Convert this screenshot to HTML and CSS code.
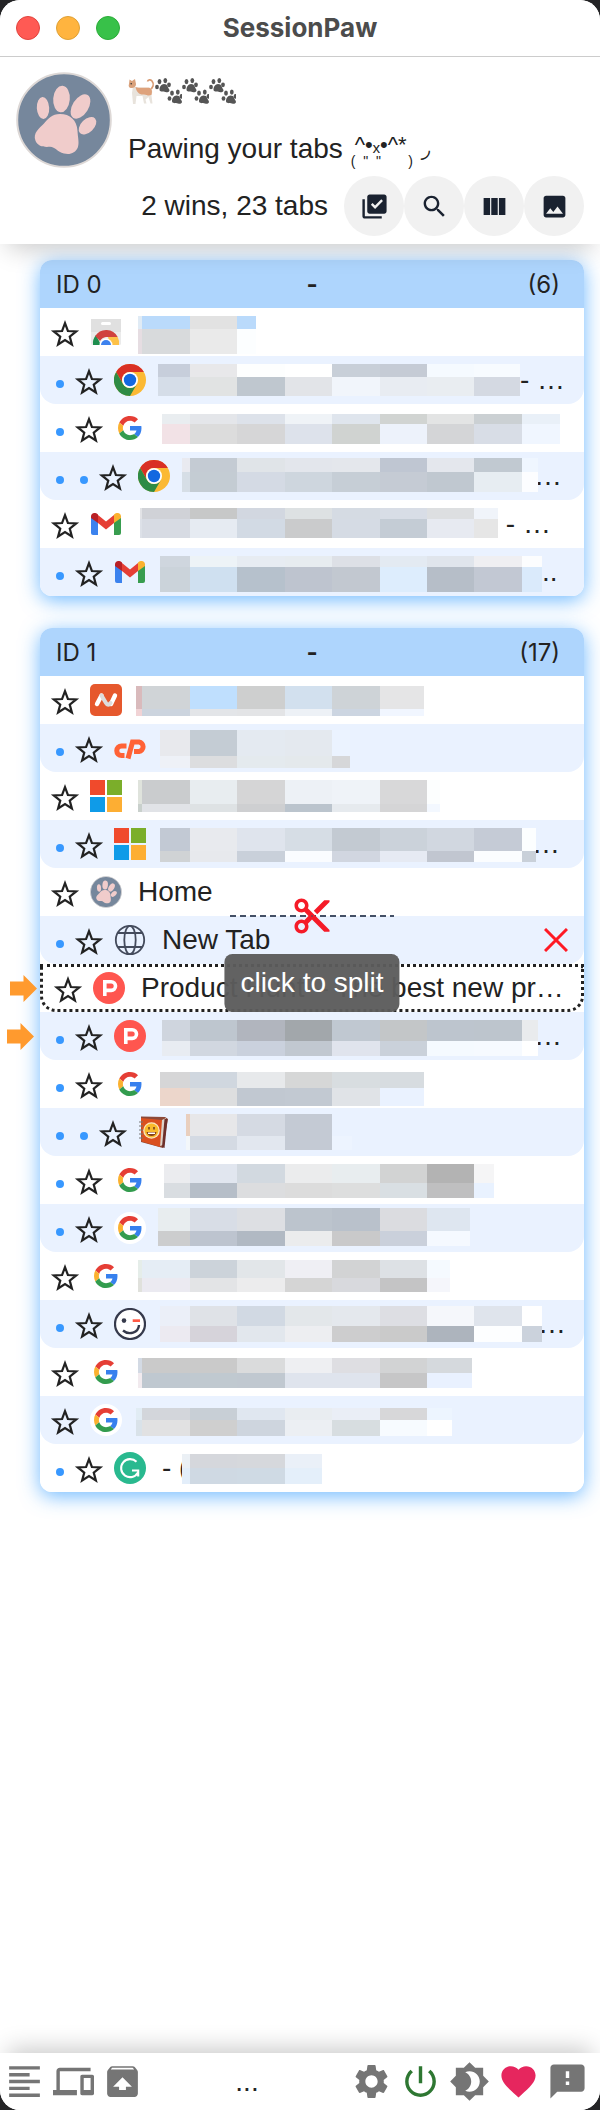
FILE: index.html
```html
<!DOCTYPE html>
<html lang="en">
<head>
<meta charset="utf-8">
<meta name="viewport" content="width=device-width, initial-scale=1">
<title>SessionPaw</title>
<link rel="stylesheet" href="styles.css">
</head>
<body>
<svg class="sprite" aria-hidden="true">
  <symbol id="star" viewBox="0 0 34 34"><path d="M17 8.200L19.900 16l8.300.4-6.450 5.150L23.900 29.500 17 25l-6.900 4.500 2.150-7.950L5.800 16.400l8.300-.4z" fill="none" stroke="#222" stroke-width="2.200" stroke-miterlimit="10"/></symbol>
  <symbol id="paw" viewBox="0 0 96 96"><circle cx="48" cy="48" r="46.800" fill="#76879c" stroke="#ddd8d6" stroke-width="2"/><g fill="#f0cccb"><ellipse cx="27" cy="36" rx="6.200" ry="11" transform="rotate(-3 27 36)"/><ellipse cx="45.500" cy="27" rx="8.300" ry="13.300" transform="rotate(5 45.500 27)"/><ellipse cx="64.500" cy="34.500" rx="8" ry="13.500" transform="rotate(32 64.500 34.500)"/><ellipse cx="71.500" cy="53.800" rx="6.500" ry="10.500" transform="rotate(46 71.500 53.800)"/><path d="M44 42c10 0 17 6 17.500 17 .4 7 2 12 .3 16.500C59.500 81 54 83 48 81.500 41 80 39.500 75 34 74.800c-6 .5-12 0-14.500-6-3-8 4-12.500 8.500-17.300C32 47 36 42 44 42z"/></g></symbol>
  <symbol id="chrome" viewBox="0 0 32 32"><circle cx="16" cy="16" r="16" fill="#fbb934"/><path d="M2.140 8A16 16 0 0 1 29.860 8H16a8 8 0 0 0-6.930 12z" fill="#d93025"/><path d="M2.140 8A16 16 0 0 0 16 32l6.930-12A8 8 0 0 1 9.070 20z" fill="#2e8b45"/><circle cx="16" cy="16" r="8" fill="#fff"/><circle cx="16" cy="16" r="6.200" fill="#1368e0"/></symbol>
  <symbol id="store" viewBox="0 0 32 32"><path d="M1 3h30v24.500a1.500 1.500 0 0 1-1.500 1.500h-27A1.500 1.500 0 0 1 1 27.500z" fill="#ebebeb"/><path d="M1 3h30v13H1z" fill="#e0e0e0"/><rect x="11" y="6" width="10" height="3" rx="1.500" fill="#fff"/><path d="M3 29a13 13 0 0 1 3-10l5 10z" fill="#1e8e4e"/><path d="M5.200 20A13 13 0 0 1 27.700 21H16a8 8 0 0 0-6 4z" fill="#d0423e"/><path d="M18 21h9.700A13 13 0 0 1 29 29h-9z" fill="#fdc148"/><path d="M9.500 29a6.500 6.500 0 0 1 13 0z" fill="#fff"/><path d="M11 29a5 5 0 0 1 10 0z" fill="#3d82ee"/></symbol>
  <symbol id="google" viewBox="-8 -8 64 64"><path fill="#e53e35" d="M24 9.500c3.540 0 6.710 1.220 9.210 3.600l6.850-6.850C35.900 2.380 30.470 0 24 0 14.620 0 6.510 5.380 2.560 13.220l7.980 6.190C12.430 13.720 17.740 9.500 24 9.500z"/><path fill="#3780ee" d="M46.980 24.550c0-1.570-.15-3.090-.38-4.550H24v9.020h12.940c-.58 2.960-2.260 5.480-4.780 7.180l7.730 6c4.510-4.180 7.090-10.360 7.090-17.650z"/><path fill="#fbb12f" d="M10.530 28.590c-.48-1.450-.76-2.990-.76-4.590s.27-3.140.76-4.590l-7.980-6.190C.92 16.460 0 20.120 0 24s.92 7.540 2.560 10.780z"/><path fill="#339c4e" d="M24 48c6.480 0 11.930-2.130 15.890-5.810l-7.730-6c-2.150 1.450-4.920 2.300-8.160 2.300-6.260 0-11.570-4.220-13.470-9.910l-7.980 6.190C6.510 42.620 14.620 48 24 48z"/></symbol>
  <symbol id="google-round" viewBox="0 0 32 32"><circle cx="16" cy="16" r="16" fill="#fff"/><use href="#google" width="32" height="32"/></symbol>
  <symbol id="gmail" viewBox="0 0 32 32"><path fill="#3b82ee" d="M1 8l7 5v14H3a2 2 0 0 1-2-2z"/><path fill="#389d4f" d="M31 8l-7 5v14h5a2 2 0 0 0 2-2z"/><path fill="#e53e35" d="M8 7l8 6.500L24 7v8l-8 6.500L8 15z"/><path fill="#b92025" d="M1 8.500C1 5 4.800 3.800 8 6.500V15l-7-5z"/><path fill="#fbb12f" d="M31 8.500c0-3.500-3.800-4.700-7-2V15l7-5z"/></symbol>
  <symbol id="namecheap" viewBox="0 0 32 32"><rect width="32" height="32" rx="5" fill="#e6582d"/><path d="M7 20l4.500-8.500M21 20l4-8.500" stroke="#fff" stroke-width="4.400" stroke-linecap="round"/><path d="M11.500 11.500l4.500 7.500q2 3.500 4.500 0" fill="none" stroke="#ddd" stroke-width="4" stroke-linecap="round"/></symbol>
  <symbol id="cpanel" viewBox="0 0 32 32"><path d="M12.500 14H7.500a4.700 4.700 0 0 0 0 9.500h3M14 26.500L18.500 10h6.500a4.800 4.800 0 0 1 0 9.500h-5" fill="none" stroke="#ff6236" stroke-width="5"/></symbol>
  <symbol id="microsoft" viewBox="0 0 32 32"><path fill="#f04a2c" d="M0 0h15v15H0z"/><path fill="#7bae2a" d="M17 0h15v15H17z"/><path fill="#0f9be8" d="M0 17h15v15H0z"/><path fill="#fdae33" d="M17 17h15v15H17z"/></symbol>
  <symbol id="globe" viewBox="0 0 32 32"><g fill="none" stroke="#444b5c" stroke-width="1.800"><circle cx="16" cy="16" r="14.200"/><ellipse cx="16" cy="16" rx="5.700" ry="14.200"/><path d="M4 9h24M4 23h24"/></g></symbol>
  <symbol id="producthunt" viewBox="0 0 32 32"><circle cx="16" cy="16" r="16" fill="#ff564f"/><path d="M11.800 24V9.800h6.400a4.300 4.300 0 0 1 0 8.600h-6.400" fill="none" stroke="#fff" stroke-width="3.600"/></symbol>
  <symbol id="book" viewBox="0 0 32 32"><path d="M3 .5l24 .5 3 2-5 29L3 26z" fill="#8c4938"/><path d="M22 5l6-3-3 27-3 1z" fill="#ddd3ca"/><path d="M26.500 3l3 0-3 29-2.500-1z" fill="#6d2f2a"/><path d="M3 2l21 2-2 27L3.500 25.500z" fill="#da501f"/><circle cx="13.500" cy="14.500" r="8.300" fill="#fbe6bd"/><circle cx="13.500" cy="14.500" r="7" fill="#f9bb2c"/><path d="M11 11v2.500M16 11v2.500" stroke="#6d3b1c" stroke-width="1.500"/><path d="M8.500 16h10q-1 4-5 4t-5-4z" fill="#854016"/><path d="M10 16.500h7v1.500h-7z" fill="#fff"/><path d="M1 6h4M1 10h4M1 14h4M1 18h4M1 22h4" stroke="#777" stroke-width="1.200"/></symbol>
  <symbol id="wink" viewBox="0 0 32 32"><circle cx="16" cy="16" r="15" fill="#fff" stroke="#363a4c" stroke-width="2.200"/><circle cx="10" cy="12.600" r="2.300" fill="#363a4c"/><path d="M18.700 11.300H26V14h-7.300z" fill="#ff5a45"/><path d="M9 22.500c6 5 15.500 2.500 16-5.500" fill="none" stroke="#363a4c" stroke-width="2.400"/></symbol>
  <symbol id="grammarly" viewBox="0 0 32 32"><circle cx="16" cy="16" r="16" fill="#29b98f"/><path d="M22.500 9.800A9 9 0 1 0 24 20.500M18 18.500h6.200v6" fill="none" stroke="#fff" stroke-width="2.100"/></symbol>
  <symbol id="arrow" viewBox="0 0 27 27"><path fill="#ff9a2e" d="M0 6.500h13.500V0L27 13.500 13.500 27v-6.500H0z"/></symbol>
  <symbol id="paw-pair" viewBox="0 0 27 27"><g id="print" fill="#555"><ellipse cx="2" cy="9" rx="1.900" ry="2.300"/><ellipse cx="4.500" cy="3.600" rx="1.900" ry="2.600"/><ellipse cx="10.300" cy="2.600" rx="1.900" ry="2.600"/><ellipse cx="14" cy="6.800" rx="1.900" ry="2.400"/><path d="M9 6c4 0 3.500 3.500 5 5 1.500 2.500-1 3.800-3.500 3-2.500-.7-6 .3-6-2.500C4.500 8.800 6.500 6 9 6z"/></g><use href="#print" x="12.500" y="11.500"/></symbol>
</svg>

<div class="window">
  <div class="titlebar">
    <div class="lights">
      <button class="light light-close" aria-label="Close"></button>
      <button class="light light-min" aria-label="Minimise"></button>
      <button class="light light-max" aria-label="Zoom"></button>
    </div>
    <h1 class="app-name">SessionPaw</h1>
  </div>

  <header class="header">
    <svg class="avatar" role="img" aria-label="SessionPaw logo"><use href="#paw"/></svg>
    <div class="intro">
      <div class="cats">
        <svg class="cat" viewBox="0 0 27 27" aria-hidden="true"><path d="M21.500 12c3.500-1.500 5-6 2.500-9-1.500-1.700-4-1.500-4.500.5" fill="none" stroke="#d89b73" stroke-width="1.700"/><path d="M5 8c5 2.500 11 1 16 1.500 4 1 3.500 5 2.500 8l1 8h-2l-2-6.500-3 2.500 1 4h-2.500L14.500 18l-6 0-1 8H5l-1-11z" fill="#e8e3dc"/><path d="M7.500 9c5 1.500 9 .5 13.500.8 4 1 3 5 2.500 7-3.500 2-4.500-.5-8-.3-4 .5-7-2.500-8-7.500z" fill="#dea27c"/><path d="M1.500 1.500L4 3l3-2 1 5c0 3-2.500 4-4.500 4S0 8.500 1 6z" fill="#d9a17b"/><circle cx="3.200" cy="5.800" r=".8" fill="#333"/></svg>
        <svg class="pair"><use href="#paw-pair"/></svg><svg class="pair"><use href="#paw-pair"/></svg><svg class="pair"><use href="#paw-pair"/></svg>
      </div>
      <div class="tagline">
        <span>Pawing your tabs</span>
        <span class="kaomoji"><span class="face">^•ₓ•^*</span><span class="paws">( &nbsp;" &nbsp;" &nbsp; &nbsp; &nbsp; )</span></span><span class="tail-mark">◞</span>
      </div>
      <div class="summary">
        <span class="counts">2 wins, 23 tabs</span>
        <div class="tools">
          <button class="tool" aria-label="Select all"><svg viewBox="0 0 24 24"><path d="M20 2H8c-1.100 0-2 .9-2 2v12c0 1.100.9 2 2 2h12c1.100 0 2-.9 2-2V4c0-1.100-.9-2-2-2zm-7.530 12L9 10.500l1.400-1.410 2.070 2.080L17.600 6 19 7.410 12.470 14zM4 6H2v14c0 1.100.9 2 2 2h14v-2H4V6z"/></svg></button>
          <button class="tool" aria-label="Search"><svg viewBox="0 0 24 24"><path d="M15.500 14h-.79l-.28-.27C15.410 12.590 16 11.110 16 9.500 16 5.910 13.090 3 9.500 3S3 5.910 3 9.500 5.910 16 9.500 16c1.610 0 3.090-.59 4.230-1.570l.27.28v.79l5 4.990L20.490 19l-4.990-5zm-6 0C7.010 14 5 11.990 5 9.500S7.010 5 9.500 5 14 7.010 14 9.500 11.990 14 9.500 14z"/></svg></button>
          <button class="tool" aria-label="Columns"><svg viewBox="0 0 24 24"><path d="M9.330 5v14h5.330V5zM15.670 5v14H21V5zM8.330 5v14H3V5z"/></svg></button>
          <button class="tool" aria-label="Image"><svg viewBox="0 0 24 24"><path d="M21 19V5c0-1.100-.9-2-2-2H5c-1.100 0-2 .9-2 2v14c0 1.100.9 2 2 2h14c1.100 0 2-.9 2-2zM5 18l3.500-4.500 2.500 3.010L14.500 12 19 18z"/></svg></button>
        </div>
      </div>
    </div>
  </header>

  <main class="sessions">
    <section class="card" aria-label="Window 0">
      <div class="card-head"><span>ID 0</span><b>-</b><span class="count">(6)</span></div>
      <ul class="tabs" data-window="0"></ul>
    </section>
    <section class="card" aria-label="Window 1">
      <div class="card-head"><span>ID 1</span><b>-</b><span class="count">(17)</span></div>
      <ul class="tabs" data-window="1"></ul>
    </section>
  </main>

  <footer class="footer">
    <div class="group">
      <button class="action" aria-label="List"><svg viewBox="0 0 24 24"><path d="M15 15H3v2h12v-2zm0-8H3v2h12V7zM3 13h18v-2H3v2zm0 8h18v-2H3v2zM3 3v2h18V3H3z"/></svg></button>
      <button class="action" aria-label="Devices"><svg viewBox="0 0 24 24"><path d="M4 6h18V4H4c-1.100 0-2 .9-2 2v11H0v3h14v-3H4V6zm19 2h-6c-.55 0-1 .45-1 1v10c0 .55.45 1 1 1h6c.55 0 1-.45 1-1V9c0-.55-.45-1-1-1zm-1 9h-4v-7h4v7z"/></svg></button>
      <button class="action" aria-label="Restore"><svg viewBox="0 0 24 24"><path d="M20.550 5.220l-1.390-1.680C18.880 3.210 18.470 3 18 3H6c-.47 0-.88.210-1.150.550L3.460 5.220C3.170 5.570 3 6.010 3 6.500V19c0 1.100.89 2 2 2h14c1.100 0 2-.9 2-2V6.500c0-.49-.17-.93-.45-1.280zM12 9.500l5.500 5.500H14v2h-4v-2H6.500L12 9.500zM5.120 5l.82-1h12l.93 1H5.120z"/></svg></button>
    </div>
    <span class="status">...</span>
    <div class="group">
      <button class="action" aria-label="Settings"><svg viewBox="0 0 24 24"><path d="M19.140 12.940c.04-.3.060-.61.060-.94 0-.32-.02-.64-.07-.94l2.030-1.580c.18-.14.230-.41.120-.61l-1.920-3.320c-.12-.22-.37-.29-.59-.22l-2.390.96c-.5-.38-1.030-.7-1.620-.94l-.36-2.540c-.04-.24-.24-.41-.48-.41h-3.840c-.24 0-.43.170-.47.410l-.36 2.540c-.59.240-1.130.570-1.620.940l-2.390-.96c-.22-.08-.47 0-.59.220L2.740 8.870c-.12.210-.08.470.12.610l2.030 1.580c-.05.3-.09.63-.09.94s.02.640.07.940l-2.030 1.580c-.18.140-.23.410-.12.610l1.920 3.320c.12.220.37.290.59.220l2.390-.96c.5.380 1.030.7 1.620.940l.36 2.540c.05.240.24.410.48.410h3.840c.24 0 .44-.17.470-.41l.36-2.540c.59-.24 1.130-.56 1.620-.94l2.390.96c.22.080.47 0 .59-.22l1.920-3.320c.12-.22.070-.47-.12-.61l-2.010-1.580zM12 15.600c-1.980 0-3.600-1.620-3.600-3.600s1.620-3.600 3.600-3.600 3.600 1.620 3.600 3.600-1.620 3.600-3.600 3.600z"/></svg></button>
      <button class="action power" aria-label="Power"><svg viewBox="0 0 24 24"><path d="M13 3h-2v10h2V3zm4.830 2.170l-1.420 1.420C17.990 7.860 19 9.810 19 12c0 3.870-3.130 7-7 7s-7-3.130-7-7c0-2.190 1.010-4.140 2.580-5.420L6.170 5.170C4.230 6.820 3 9.260 3 12c0 4.970 4.030 9 9 9s9-4.030 9-9c0-2.740-1.230-5.180-3.170-6.830z"/></svg></button>
      <button class="action" aria-label="Theme"><svg viewBox="0 0 24 24"><path d="M20 8.690V4h-4.690L12 .69 8.690 4H4v4.690L.69 12 4 15.310V20h4.690L12 23.310 15.310 20H20v-4.690L23.310 12 20 8.690zM12 18c-.89 0-1.740-.2-2.500-.55C11.560 16.500 13 14.420 13 12s-1.440-4.500-3.500-5.450C10.260 6.200 11.110 6 12 6c3.310 0 6 2.690 6 6s-2.690 6-6 6z"/></svg></button>
      <button class="action heart" aria-label="Favourite"><svg viewBox="0 0 24 24"><path d="M12 21.350l-1.450-1.320C5.400 15.360 2 12.280 2 8.500 2 5.420 4.420 3 7.500 3c1.740 0 3.410.81 4.500 2.090C13.090 3.810 14.760 3 16.500 3 19.580 3 22 5.420 22 8.500c0 3.780-3.400 6.860-8.550 11.540L12 21.350z"/></svg></button>
      <button class="action" aria-label="Feedback"><svg viewBox="0 0 24 24"><path d="M20 2H4c-1.100 0-1.990.9-1.990 2L2 22l4-4h14c1.100 0 2-.9 2-2V4c0-1.100-.9-2-2-2zm-7 12h-2v-2h2v2zm0-4h-2V6h2v4z"/></svg></button>
    </div>
  </footer>
</div>
<script src="tabs.js"></script>
</body>
</html>
```

FILE: styles.css
```css
* { box-sizing: border-box; }

body {
  margin: 0;
  background: #242426;
  color: #222;
  font: 28px/48px "Liberation Sans", Arial, sans-serif;
}

button {
  margin: 0;
  padding: 0;
  border: 0;
  background: none;
  font: inherit;
  color: inherit;
  cursor: pointer;
}

svg { display: block; flex: none; }
.sprite { position: absolute; width: 0; height: 0; }

.window {
  display: flex;
  flex-direction: column;
  min-height: 100vh;
  overflow: hidden;
  background: #fff;
  border-radius: 20px;
}

/* Title bar */
.titlebar {
  position: relative;
  z-index: 2;
  display: grid;
  grid-template-columns: 1fr auto 1fr;
  align-items: center;
  height: 57px;
  padding: 0 16px;
  background: #fff;
  border-bottom: 1px solid #ccc;
}
.lights { display: flex; gap: 16px; }
.light { width: 24px; height: 24px; border: 1px solid #e0443e; border-radius: 50%; background: #ff5a54; }
.light-min { border-color: #dea035; background: #ffb43f; }
.light-max { border-color: #2bac38; background: #38c149; }
.app-name { margin: 0; color: #4c4c4c; font: 700 26px/32px Inter, sans-serif; }

/* Header */
.header {
  position: relative;
  z-index: 1;
  display: flex;
  gap: 16px;
  padding: 4px 16px 8px;
  background: #fff;
  box-shadow: 0 12px 24px -8px rgba(0, 0, 0, .22);
}
.avatar { width: 96px; height: 96px; margin-top: 11px; }
.intro { flex: 1; display: grid; grid-template-rows: 60px 55px 60px; align-items: center; }
.cats { display: flex; }
.cat, .pair { width: 27px; height: 27px; }
.tagline { display: flex; gap: 8px; align-items: center; }
.kaomoji { display: flex; flex-direction: column; line-height: 16px; padding-top: 8px; white-space: nowrap; }
.face { padding-left: 4px; font-size: 22px; }
.paws { font-size: 14px; }
.tail-mark { font-family: "DejaVu Sans", sans-serif; font-size: 24px; line-height: 24px; }
.summary { display: flex; justify-content: flex-end; align-items: center; gap: 16px; }
.tools { display: flex; }
.tool { display: grid; place-items: center; width: 60px; height: 60px; border-radius: 50%; background: #f1f1f1; }
.tool svg { width: 29px; height: 29px; fill: #1a2230; }

/* Window cards */
.sessions { flex: 1; display: flex; flex-direction: column; gap: 32px; padding: 16px 16px 32px 40px; }
.card {
  border-radius: 12px;
  background: #fff;
  box-shadow: 0 4px 20px rgba(50, 155, 255, .7);
}
.card-head {
  display: grid;
  grid-template-columns: 1fr auto 1fr;
  padding: 1px 16px 0;
  border-radius: 12px 12px 0 0;
  background: #aed5fd;
  font: 24px/47px Inter, sans-serif;
}
.count { padding-right: 8px; text-align: right; }

.tabs { margin: 0; padding: 0; list-style: none; }
.tab {
  position: relative;
  display: flex;
  align-items: center;
  height: 48px;
  padding: 0 16px 0 8px;
  background: #fff;
}
.tab:nth-child(even) { background: #eaf2ff; border-radius: 0 0 16px 16px; }
.tab:last-child { border-radius: 0 0 12px 12px; }
.tab.current { padding-right: 13px; border: 3px dotted #222; border-radius: 0 0 16px 16px; }
.dot { flex: none; width: 24px; height: 8px; padding: 0 8px; margin-top: 8px; }
.dot::before { content: ""; display: block; width: 8px; height: 8px; border-radius: 50%; background: #3898ff; }
.star { flex: none; margin-right: 8px; }
.star svg { width: 34px; height: 34px; }
.favicon { width: 32px; height: 32px; margin-right: 16px; }
.title { flex: 1; min-width: 0; overflow: hidden; color: inherit; text-decoration: none; text-overflow: ellipsis; white-space: pre; }
.title.masked { display: flex; margin-left: -4px; text-overflow: clip; }
.lead { overflow: hidden; padding-left: 4px; }
.mosaic { position: relative; height: 48px; }
.tuck { margin-left: -4px; }
.close { width: 24px; height: 24px; }
.close svg { width: 24px; height: 24px; stroke: #ff1a24; stroke-width: 3; }
.arrow { position: absolute; left: -33px; width: 27px; height: 27px; }

/* Split marker between two tabs */
.split {
  position: absolute;
  z-index: 2;
  top: -21px;
  left: 50%;
  width: 164px;
  height: 42px;
  display: grid;
  place-items: center;
  transform: translateX(-50%);
  background: repeating-linear-gradient(90deg, #445066 0 6px, transparent 6px 10px) center / 100% 2px no-repeat;
}
.split svg { width: 42px; height: 42px; fill: #f51b28; }
.tooltip {
  position: absolute;
  z-index: 2;
  top: 38px;
  left: 50%;
  padding: 5px 16px;
  transform: translateX(-50%);
  border-radius: 8px;
  background: rgba(92, 92, 92, .96);
  color: #fff;
  white-space: nowrap;
}

/* Footer */
.footer {
  display: flex;
  align-items: center;
  height: 57px;
  padding: 0 12px 0 4px;
  background: #fff;
  box-shadow: 0 -12px 24px -8px rgba(0, 0, 0, .22);
}
.group { display: flex; gap: 8px; }
.action, .action svg { width: 41px; height: 41px; fill: #757575; }
.power svg { fill: #2e7732; }
.heart svg { fill: #e6265e; }
.status { flex: 1; text-align: center; }
```

FILE: tabs.js
```js
// Each masked title holds a mosaic: [x start, x end, top, middle, bottom, upper colours, lower colours].
const windows = [
  [
    { icon: "store", mask: [138, 256, 8, 21, 46, "e0ebf5 badafb e2e2e2 badafb", "e6dde2 d8dadc eaeaea fcfeff"] },
    { icon: "chrome", depth: 1, mask: [158, 520, 8, 21, 40, "c7cedb e8e8ea fdfefe ffffff c8cfd8 c5cbd5 f5faff f7fbff", "d5dde8 e1e3e3 bfc7cf e2e4e8 f1f5fb e8ecf2 e9edf1 d4d9e2"], tail: "- …" },
    { icon: "google", depth: 1, mask: [162, 560, 10, 20, 40, "e9edf0 e4e6ea dde2ea eff3f7 dfe5ed d1d4d2 e3e4e4 cbd0d3 e9f0f8", "f2e2e6 dcdcdc d6d6d7 dde2eb d0d3d1 edf2fb d4d5d7 d8dde6 f0f6ff"] },
    { icon: "chrome", depth: 2, mask: [182, 538, 6, 20, 40, "e9eaf0 c4cbd3 e0e4e8 e3e6ec e4e7ec bfc6d2 e4e7ed c1c9d1 eff6ff", "d6dee6 c4ccd3 d4dae4 ced6de c6ced6 c5cbd4 c0c8d0 e7edf2 fcfdff"], tail: "…", tuck: true },
    { icon: "gmail", mask: [140, 498, 8, 19, 38, "e2e3e6 d0d2d7 c7c8c8 d2d7e0 dde1e3 d5dbe3 d8dde6 dddfe1 f0f4fa", "dde1e8 d7dbe3 e6ebf2 d2dae4 cacbcc d5dbe4 c4ccd5 e7eaf1 e6e6e6"], tail: " - …" },
    { icon: "gmail", depth: 1, mask: [160, 542, 8, 19, 44, "cfd6de edf3f7 e7ecf2 e7ecf0 dde0e6 e3eaf2 e0e5ec efeff2 fcfdfe", "cbd3da cfe0f0 b6c1cc bec4cf c2c8d0 ddedfd b6bec8 c2c8d3 daeafb"], tail: ".." }
  ],
  [
    { icon: "namecheap", mask: [136, 424, 10, 33, 40, "d9babc d0d4d7 bfdffe cecfcf d2e0ee ced3d7 e5e5e6", "f1d3d5 ccd4de e3e5e8 e3e4e6 edf1f6 ccd5e1 f1f6ff"] },
    { icon: "cpanel", depth: 1, mask: [160, 350, 6, 32, 44, "e8e9ed c4ccd4 e4eaf1 e4e9ef ebf3ff", "eef1f7 dcdddf e4eaee e4e9ec d6d7d9"] },
    { icon: "microsoft", mask: [138, 440, 8, 32, 40, "dfe3dc caccce e8edf0 d5d5d6 edf1f6 eff3f8 d8d8d9 fcfefe", "c9d0cc e1e3e7 dee2e4 cecfd1 bbc4cd e6eaee d5d5d6 f3f8ff"] },
    { icon: "microsoft", depth: 1, mask: [160, 536, 8, 31, 42, "c2c9d4 e8eaee dfe4ed d6dde5 c3cad2 cbd2da d1d7e0 c5cbd6 fcfeff", "d0d3d5 e7e9ed c9d0da fafcff d1d6e0 e6eaf3 c1c6d0 fbfdff c9d0d9"], tail: "…", tuck: true },
    { icon: "paw", title: "Home" },
    { icon: "globe", depth: 1, title: "New Tab", split: true },
    { icon: "producthunt", title: "Product Hunt – The best new products in tech.", current: true, arrow: true },
    { icon: "producthunt", depth: 1, arrow: true, mask: [162, 538, 8, 29, 44, "cfd5de bec6cf b1b5be a2a7ab c0c8d1 c3c6c8 bdc5ce bdc5cd e9ebed", "e8ecf2 d1d7e0 cad1dd c1c8d0 e0e4ed cad1da f5faff f6faff ffffff"], tail: "…", tuck: true },
    { icon: "google", depth: 1, mask: [160, 424, 12, 28, 46, "d6d6d7 d0d7df e7e9eb d6d7d7 d8dde0 d7dce0", "ecd6cb dddedf c1c8d1 c2c9d2 e0e3e7 eaf2ff"] },
    { icon: "book", depth: 2, mask: [186, 352, 6, 28, 42, "e9cfbe e7e7e9 d5dae3 c4cad4 eaf2ff", "f3f7fa d4dae3 e2e7ef c4cad4 edf4ff"] },
    { icon: "google", depth: 1, mask: [164, 494, 8, 27, 42, "ebecef e1e6ef d2d9e0 ebeced e8edef d2d3d3 b3b3b3 f5f5f6", "d9dde1 b6bec8 dcdddf dcdcdc dddede d9dfe3 bfbfc0 e9f2ff"] },
    { icon: "google-round", depth: 1, mask: [158, 470, 4, 27, 42, "e8edef d8dde6 dddfe3 bcc4cd b9c1cb dbdce0 dee6f0", "cccdce bdc4cf b1b9c3 ebeced c9c9ca cad0db f5f9ff"] },
    { icon: "google", mask: [138, 450, 8, 26, 40, "e5ede9 e5edf5 ccd3da e2e6e9 efeff4 d2d3d4 dde1e5 f5faff", "e0e1dc ebeaf1 e3e4e6 ececed d5d5d5 d8d9dd c4c4c5 f5f6fb"] },
    { icon: "wink", depth: 1, mask: [160, 542, 6, 26, 42, "ebeff8 dfe2e7 d1d9e3 e3e7ea e4e8ed dddee3 f5f7fb dfe4ec ffffff", "eceaf1 d6d3da e2e7ed edeef1 cdcdce cacaca adb4bd fdfeff cbd2dc"], tail: "…", tuck: true },
    { icon: "google", mask: [138, 472, 10, 25, 40, "d3dae4 cacaca cacaca dadbdc eeeff2 dedee2 d2d3d4 d5d9dd", "f1eaee bfc8d0 c0c9d0 c0c8d0 dfe4ed dfe4ed c6c6c7 e9f1ff"] },
    { icon: "google-round", mask: [136, 452, 12, 24, 40, "e1ecf4 d3d6db c8cfd6 e0e7f0 e9edf1 eaeef6 d7d7d9 edf5ff", "d9e2e9 e1e1e2 cfcfcf ced5de eceff3 d7dde0 f7fbff ffffff"] },
    { icon: "grammarly", depth: 1, lead: "- (", mask: [182, 322, 10, 24, 40, "ebf0f5 d5d7dc d6d8dc eaf0f8", "e3eefa cfd9e3 cfdae4 e4effa"] }
  ]
];

const columns = [142, 190, 237, 285, 332, 380, 427, 474, 522];

function mosaic(mask, origin) {
  const [x0, x1, top, middle, bottom, upper, lower] = mask;
  const edges = [x0, ...columns.filter(x => x > x0 && x < x1), x1];
  const band = (colours, y0, y1) => colours.split(" ").map((c, i) =>
    `<rect x="${edges[i]}" y="${y0}" width="${edges[i + 1] - edges[i]}" height="${y1 - y0}" fill="#${c}"/>`).join("");
  return `<svg class="mosaic" width="${x1 - origin}" viewBox="${origin} 0 ${x1 - origin} 48" shape-rendering="crispEdges" role="img" aria-label="Hidden title">${band(upper, top, middle)}${band(lower, middle, bottom)}</svg>`;
}

function title(tab, start) {
  if (!tab.mask) return `<a class="title" href="#">${tab.title}</a>`;
  const lead = tab.lead ? `<span class="lead" style="width:${tab.mask[0] - start}px">${tab.lead}</span>` : "";
  const tail = tab.tail ? `<span class="${tab.tuck ? "tail tuck" : "tail"}">${tab.tail}</span>` : "";
  return `<a class="title masked" href="#">${lead}${mosaic(tab.mask, tab.lead ? tab.mask[0] : start)}${tail}</a>`;
}

function row(tab) {
  const depth = tab.depth || 0;
  return `<li class="tab${tab.current ? " current" : ""}">
    ${tab.arrow ? '<svg class="arrow"><use href="#arrow"/></svg>' : ""}
    ${'<span class="dot"></span>'.repeat(depth)}
    <button class="star" aria-label="Star tab"><svg><use href="#star"/></svg></button>
    <svg class="favicon"><use href="#${tab.icon}"/></svg>
    ${title(tab, 134 + 24 * depth)}
    ${tab.split ? `<button class="close" aria-label="Close tab"><svg viewBox="0 0 24 24"><path d="M1 1l22 22M23 1L1 23"/></svg></button>
    <button class="split" aria-describedby="split-tip" aria-label="Split"><svg viewBox="0 0 24 24"><path d="M9.640 7.640c.23-.5.360-1.050.360-1.640 0-2.210-1.790-4-4-4S2 3.790 2 6s1.790 4 4 4c.59 0 1.140-.13 1.640-.36L10 12l-2.360 2.360C7.140 14.130 6.590 14 6 14c-2.210 0-4 1.790-4 4s1.790 4 4 4 4-1.790 4-4c0-.59-.13-1.140-.36-1.640L12 14l7 7h3v-1L9.640 7.640zM6 8c-1.100 0-2-.89-2-2s.9-2 2-2 2 .89 2 2-.9 2-2 2zm0 12c-1.100 0-2-.89-2-2s.9-2 2-2 2 .89 2 2-.9 2-2 2zm6-7.500c-.28 0-.5-.22-.5-.5s.22-.5.5-.5.5.22.5.5-.22.5-.5.5zM19 3l-6 6 2 2 7-7V3z"/></svg></button>
    <span class="tooltip" id="split-tip" role="tooltip">click to split</span>` : ""}
  </li>`;
}

document.querySelectorAll(".tabs").forEach(list => {
  list.innerHTML = windows[list.dataset.window].map(row).join("");
});
```
